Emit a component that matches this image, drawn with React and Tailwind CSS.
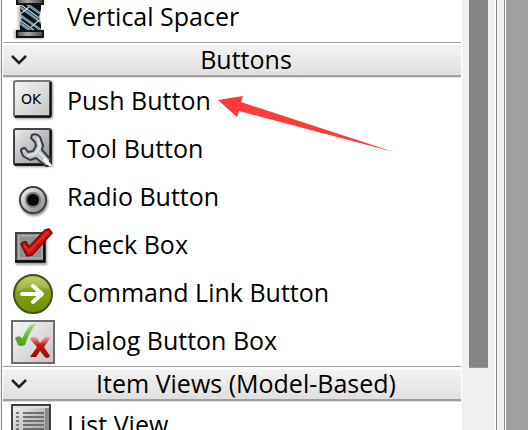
import React from "react";

function Icon({ children }) {
  return (
    <svg className="h-12 w-12 shrink-0" viewBox="0 0 48 48" fill="none" aria-hidden="true">
      {children}
    </svg>
  );
}

function Definitions() {
  return (
    <svg className="absolute h-0 w-0" aria-hidden="true">
      <defs>
        <linearGradient id="plate" x1="0" y1="0" x2="1" y2="1">
          <stop offset="0" stopColor="#f6f6f6" />
          <stop offset="1" stopColor="#c4c4c4" />
        </linearGradient>
        <linearGradient id="plateDark" x1="0" y1="0" x2="1" y2="1">
          <stop offset="0" stopColor="#eeeeee" />
          <stop offset="1" stopColor="#8c8c8c" />
        </linearGradient>
        <linearGradient id="cap" x1="0" y1="0" x2="1" y2="0">
          <stop offset="0" stopColor="#555" />
          <stop offset="0.4" stopColor="#a4a4a4" />
          <stop offset="1" stopColor="#484848" />
        </linearGradient>
        <linearGradient id="green" x1="0" y1="0" x2="0" y2="1">
          <stop offset="0" stopColor="#b2c44e" />
          <stop offset="0.45" stopColor="#839d12" />
          <stop offset="1" stopColor="#6d9000" />
        </linearGradient>
        <linearGradient id="tick" x1="0" y1="1" x2="1" y2="0">
          <stop offset="0.3" stopColor="#4fa91c" />
          <stop offset="1" stopColor="#a4e480" />
        </linearGradient>
        <linearGradient id="cross" x1="0" y1="0" x2="0" y2="1">
          <stop offset="0" stopColor="#efaaaa" />
          <stop offset="0.4" stopColor="#c51818" />
          <stop offset="1" stopColor="#a80000" />
        </linearGradient>
        <filter id="soft" x="-20%" y="-20%" width="150%" height="150%">
          <feGaussianBlur stdDeviation="1" />
        </filter>
        <clipPath id="coil">
          <path d="M12 10H32V15L30 23L32 31V36H11V31L13 23L11 15Z" />
        </clipPath>
      </defs>
    </svg>
  );
}

function VerticalSpacerIcon() {
  return (
    <Icon>
      <path d="M5 36h29v9H5zM9 12h22v24H9z" fill="#000" opacity=".25" filter="url(#soft)" />
      <g clipPath="url(#coil)">
        <path d="M11 10H32V36H11Z" fill="#0c1014" />
        <path d="M8 3L36 23M8 11L36 31M8 19L36 39M8 27L36 47" stroke="#6f98b2" strokeWidth="2.8" />
        <path d="M8 8L36 28M8 24L36 44" stroke="#dfe8ea" strokeWidth="1.1" />
        <path d="M10 21L20 13M22 33L33 24" stroke="#d8d5bd" strokeWidth="1.1" />
      </g>
      <rect x="8" y="3" width="26" height="7" fill="url(#cap)" stroke="#151515" strokeWidth="2" />
      <rect x="8" y="37" width="26" height="6" fill="url(#cap)" stroke="#151515" strokeWidth="2" />
    </Icon>
  );
}

function PushButtonIcon() {
  return (
    <Icon>
      <rect x="6" y="4" width="38" height="37" rx="2" fill="#000" opacity=".4" filter="url(#soft)" />
      <rect x="5" y="3" width="37" height="36" rx="2" fill="url(#plate)" stroke="#777" strokeWidth="2" />
      <path d="M41.5 4V37Q41.5 38.5 40 38.5H6" stroke="#111" strokeWidth="2.4" />
      <text x="12" y="26" fill="#000" className="font-['DejaVu_Sans',sans-serif] text-[14px]">OK</text>
    </Icon>
  );
}

function ToolButtonIcon() {
  return (
    <Icon>
      <rect x="6" y="4" width="38" height="37" rx="2" fill="#000" opacity=".4" filter="url(#soft)" />
      <rect x="5" y="3" width="37" height="36" rx="2" fill="url(#plateDark)" stroke="#444" strokeWidth="2" />
      <path d="M41.5 4V37Q41.5 38.5 40 38.5H6" stroke="#111" strokeWidth="2.4" />
      <path
        d="M23 9Q28 7 31 11L34 19L33 24L41 33V40H37L27 32L21 34L14 30L12 25Q12 22 16 22L19 26L24 25L27 20L26 16L22 12Z"
        fill="#c3c5cd"
        stroke="#3a3b42"
        strokeWidth="2"
        strokeLinejoin="round"
      />
      <path d="M29 12L31 21L26 28L18 30M30 26L38 35" stroke="#e4e6ee" strokeWidth="1.8" />
      <path d="M35 33L42 40" stroke="#fff" strokeWidth="3" />
    </Icon>
  );
}

function RadioButtonIcon() {
  return (
    <Icon>
      <circle cx="25" cy="28" r="14" fill="#000" opacity=".45" filter="url(#soft)" />
      <circle cx="24" cy="26" r="13" fill="#9a9a9a" stroke="#3c3c3c" strokeWidth="2" />
      <circle cx="24" cy="26" r="10" stroke="url(#plateDark)" strokeWidth="4" />
      <circle cx="24" cy="26" r="8" fill="#7c7c7c" />
      <circle cx="24" cy="26" r="6" fill="#050505" />
    </Icon>
  );
}

function CheckBoxIcon() {
  return (
    <Icon>
      <path d="M7 12H38V43H7Z" fill="#000" opacity=".35" filter="url(#soft)" />
      <rect x="7" y="11" width="28" height="28" fill="#8e8e8e" stroke="#444" strokeWidth="2" />
      <rect x="10" y="14" width="23" height="22" stroke="#a6a6a6" strokeWidth="2" />
      <path d="M35.5 11V39.5H6" stroke="#0b0b0b" strokeWidth="2.4" />
      <path
        d="M12 22Q14 19 17 20L20 25L36 8L40 7L43 11L23 33L18 34Z"
        fill="#d50f0f"
        stroke="#6b1010"
        strokeWidth="1.6"
        strokeLinejoin="round"
      />
      <path d="M15 23L20 29L39 10" stroke="#e83030" strokeWidth="1.6" />
    </Icon>
  );
}

function CommandLinkIcon() {
  return (
    <Icon>
      <circle cx="24" cy="24" r="19" fill="url(#green)" stroke="#465019" strokeWidth="2" />
      <path d="M8 21Q9 7 24 7Q38 7 40 19Q24 14 8 21Z" fill="#fff" opacity=".2" />
      <path d="M13 24H32M24 16L33 24L24 32" stroke="#fff" strokeWidth="4" strokeLinecap="round" strokeLinejoin="round" />
    </Icon>
  );
}

function DialogButtonBoxIcon() {
  return (
    <Icon>
      <rect x="3" y="3" width="42" height="42" fill="url(#plate)" stroke="#6c6c6c" strokeWidth="2" />
      <path d="M6 20Q9 17 12 19L13 21Q18 10 22 7L27 6Q20 15 16 27Q12 29 9 27Z" fill="url(#tick)" />
      <path
        d="M21 21Q24 17 28 20L31 25L36 19H42L35 29L41 38Q38 42 35 38L31 33L27 39H21L28 29Z"
        fill="url(#cross)"
      />
    </Icon>
  );
}

function ListViewIcon() {
  return (
    <Icon>
      <rect x="3" y="3" width="38" height="40" fill="#dcdcd8" stroke="#414141" strokeWidth="2" />
      <rect x="4" y="6" width="36" height="36" fill="url(#plateDark)" />
      <path d="M14 11H35M14 15H35M14 19H35M14 23H35M14 27H35M14 31H35" stroke="#6f6f6f" strokeWidth="2" />
      <path d="M7 11H10M7 15H10M7 19H10M7 23H10M7 27H10M7 31H10" stroke="#7c7c7c" strokeWidth="2" />
      <path d="M38 6V42" stroke="#8b8b8b" strokeWidth="4" />
    </Icon>
  );
}

function Widget({ icon, label }) {
  return (
    <li className="flex h-12 items-center gap-2.5 pl-[7px]">
      {icon}
      <span className="pb-1 whitespace-nowrap">{label}</span>
    </li>
  );
}

function Category({ label }) {
  return (
    <button
      type="button"
      aria-expanded="true"
      className="ml-px flex h-9 w-[calc(100%-2px)] flex-col border-t border-b border-t-[#a0a0a0] border-b-[#dcdcdc] bg-white pt-0.5"
    >
      <span className="flex w-full flex-1 items-center border-b-2 border-[#a0a0a0] bg-linear-to-b from-[#f3f3f3] to-[#e0e0e0]">
        <svg className="h-7 w-7 shrink-0" viewBox="0 0 28 28" fill="none" aria-hidden="true">
          <path d="M9 10L16 17L23 10" stroke="#222" strokeWidth="2.6" />
        </svg>
        <span className="flex-1 pb-0.5 text-center leading-7">{label}</span>
      </span>
    </button>
  );
}

export default function App() {
  return (
    <main className="relative flex h-screen overflow-hidden bg-[#f0f0f0] font-['Open_Sans','Noto_Sans',sans-serif] text-[25px] leading-8 text-black">
      <Definitions />
      <section className="ml-px min-w-0 flex-1 overflow-hidden border-l border-[#828790] bg-white" aria-label="Widget Box">
        <ul className="-mt-1.5">
          <Widget icon={<VerticalSpacerIcon />} label="Vertical Spacer" />
        </ul>
        <Category label="Buttons" />
        <ul>
          <Widget icon={<PushButtonIcon />} label="Push Button" />
          <Widget icon={<ToolButtonIcon />} label="Tool Button" />
          <Widget icon={<RadioButtonIcon />} label="Radio Button" />
          <Widget icon={<CheckBoxIcon />} label="Check Box" />
          <Widget icon={<CommandLinkIcon />} label="Command Link Button" />
          <Widget icon={<DialogButtonBoxIcon />} label="Dialog Button Box" />
        </ul>
        <Category label="Item Views (Model-Based)" />
        <ul>
          <Widget icon={<ListViewIcon />} label="List View" />
        </ul>
      </section>
      <div className="flex w-[33px] shrink-0 flex-col bg-[#f0f0f0] pr-[7px] pb-[62px] pl-[7px]">
        <div className="flex-1 border-b border-[#999] bg-[#858585]" />
      </div>
      <div className="w-[11px] shrink-0 border-r border-l border-r-white border-l-white">
        <div className="h-full border-r border-l border-r-[#828790] border-l-[#828790]" />
      </div>
      <div className="w-[22px] shrink-0 border-l border-[#a0a0a0] bg-[#a0a0a0]" />
      <svg className="absolute top-[95px] left-[218px] h-[58px] w-[177px]" viewBox="0 0 177 58" aria-hidden="true">
        <path d="M0 5L25 1L23 7L176 57L21 16L19 22Z" fill="#fc3b3b" />
      </svg>
    </main>
  );
}
